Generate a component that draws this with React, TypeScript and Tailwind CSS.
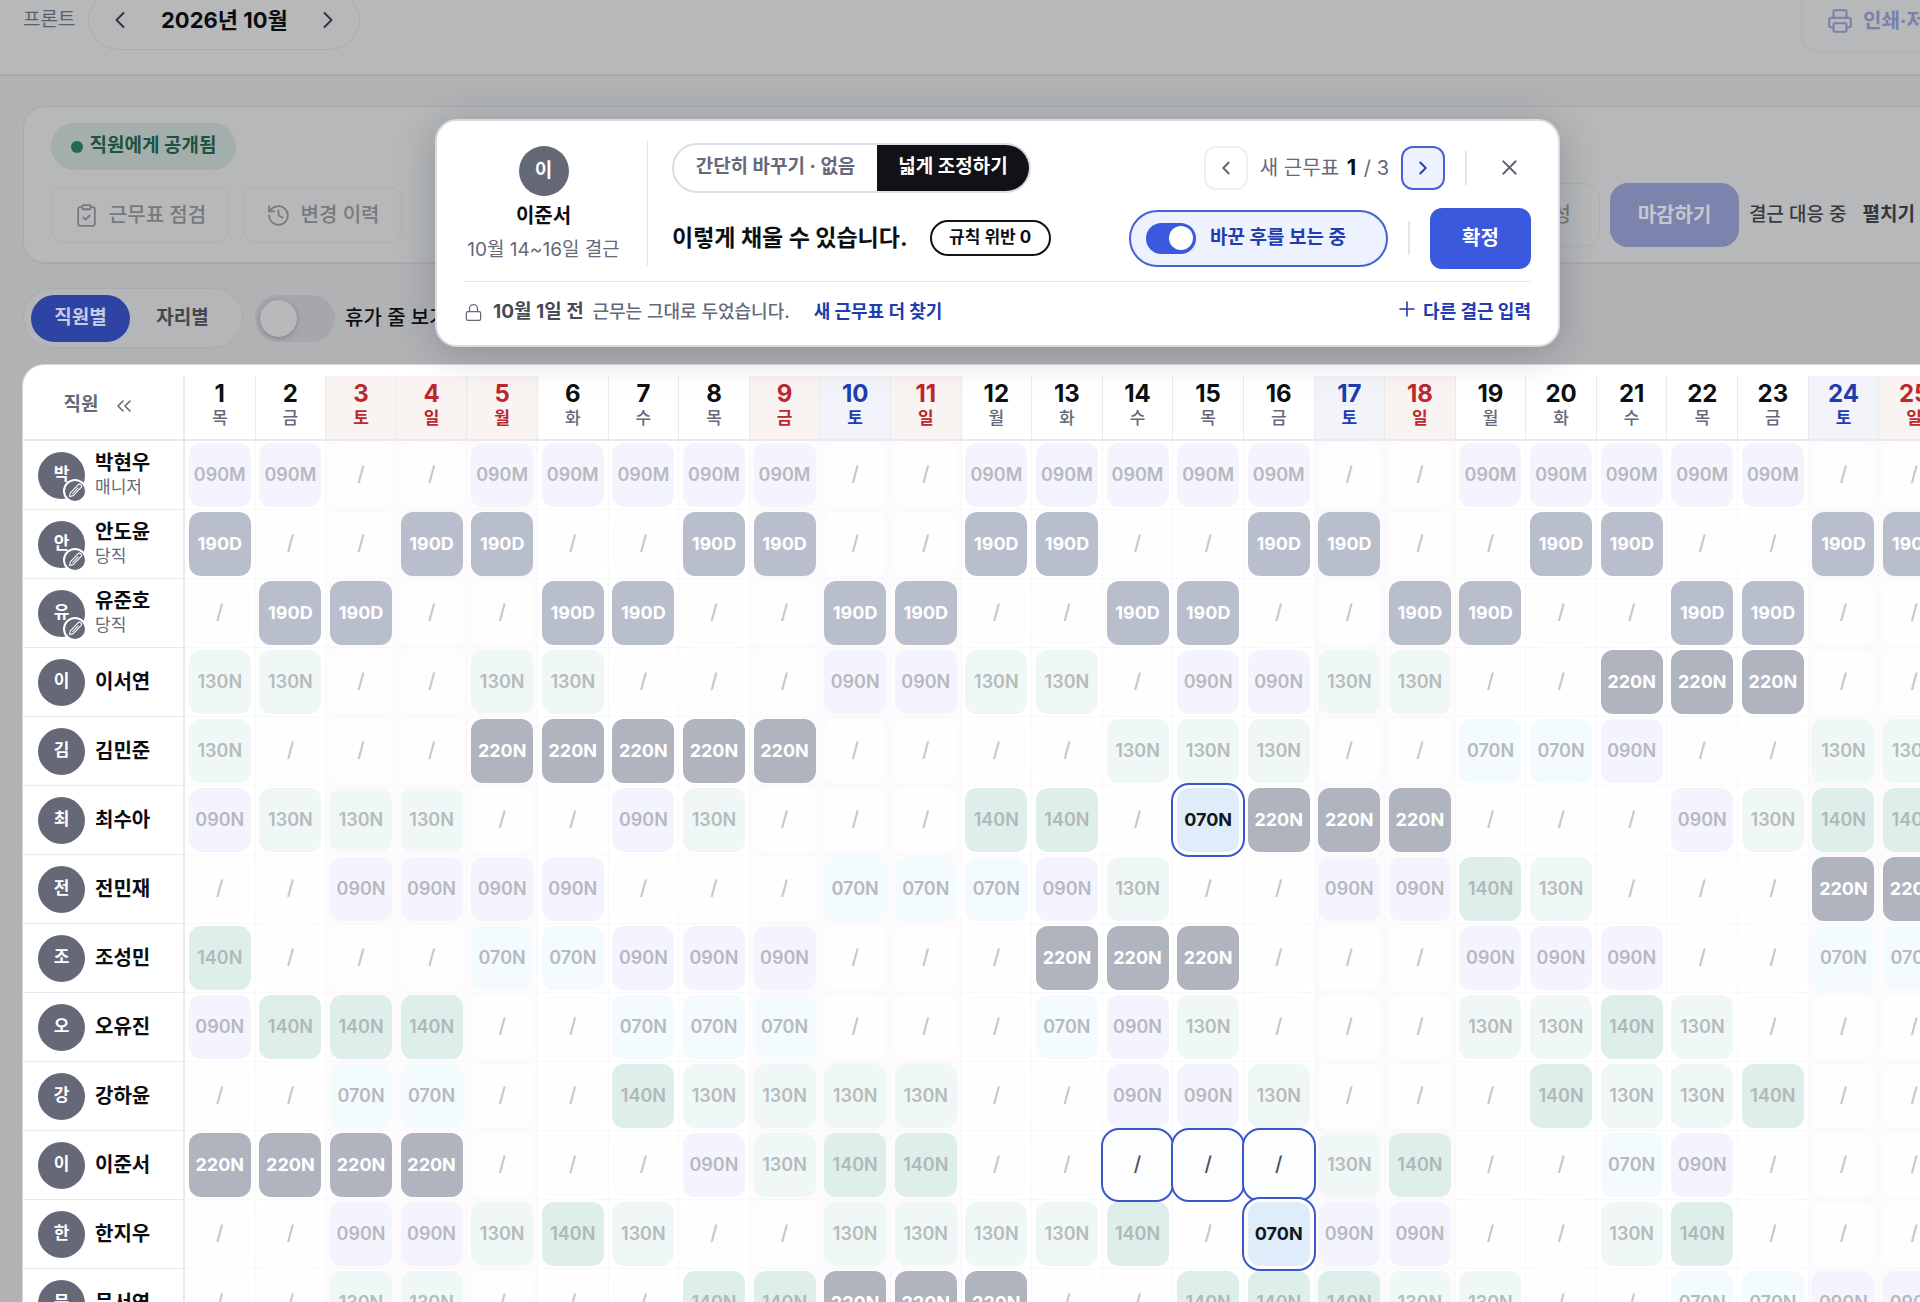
import { ChevronLeft, ChevronRight, ChevronsLeft, ClipboardCheck, History, Lock, Plus, Printer, X } from 'lucide-react'
import clsx from 'clsx'

const WEEKDAYS = ['목', '금', '토', '일', '월', '화', '수']
const HOLIDAYS = [3, 4, 5, 9, 11, 18, 25]
const SATURDAYS = [10, 17, 24]

const DAYS = Array.from({ length: 25 }, (_, i) => ({
  day: i + 1,
  weekday: WEEKDAYS[i % 7],
  holiday: HOLIDAYS.includes(i + 1),
  saturday: SATURDAYS.includes(i + 1),
}))

interface Staff {
  name: string
  role?: string
  shifts: string
}

// One token per day, "-" is a day off, "*" marks a changed cell
const STAFF: Staff[] = [
  { name: '박현우', role: '매니저', shifts: '090M 090M - - 090M 090M 090M 090M 090M - - 090M 090M 090M 090M 090M - - 090M 090M 090M 090M 090M - -' },
  { name: '안도윤', role: '당직', shifts: '190D - - 190D 190D - - 190D 190D - - 190D 190D - - 190D 190D - - 190D 190D - - 190D 190D' },
  { name: '유준호', role: '당직', shifts: '- 190D 190D - - 190D 190D - - 190D 190D - - 190D 190D - - 190D 190D - - 190D 190D - -' },
  { name: '이서연', shifts: '130N 130N - - 130N 130N - - - 090N 090N 130N 130N - 090N 090N 130N 130N - - 220N 220N 220N - -' },
  { name: '김민준', shifts: '130N - - - 220N 220N 220N 220N 220N - - - - 130N 130N 130N - - 070N 070N 090N - - 130N 130N' },
  { name: '최수아', shifts: '090N 130N 130N 130N - - 090N 130N - - - 140N 140N - 070N* 220N 220N 220N - - - 090N 130N 140N 140N' },
  { name: '전민재', shifts: '- - 090N 090N 090N 090N - - - 070N 070N 070N 090N 130N - - 090N 090N 140N 130N - - - 220N 220N' },
  { name: '조성민', shifts: '140N - - - 070N 070N 090N 090N 090N - - - 220N 220N 220N - - - 090N 090N 090N - - 070N 070N' },
  { name: '오유진', shifts: '090N 140N 140N 140N - - 070N 070N 070N - - - 070N 090N 130N - - - 130N 130N 140N 130N - - -' },
  { name: '강하윤', shifts: '- - 070N 070N - - 140N 130N 130N 130N 130N - - 090N 090N 130N - - - 140N 130N 130N 140N - -' },
  { name: '이준서', shifts: '220N 220N 220N 220N - - - 090N 130N 140N 140N - - -* -* -* 130N 140N - - 070N 090N - - -' },
  { name: '한지우', shifts: '- - 090N 090N 130N 140N 130N - - 130N 130N 130N 130N 140N - 070N* 090N 090N - - 130N 140N - - -' },
  { name: '문서연', shifts: '- - 130N 130N - - - 140N 140N 220N 220N 220N - - 140N 140N 140N 130N 130N - - 070N 070N 090N 090N' },
]

const SHIFT_STYLES: Record<string, string> = {
  '090M': 'bg-[#f3f4fe] text-[#b8b9be]',
  '090N': 'bg-[#f4f4fe] text-[#b8b9be]',
  '070N': 'bg-[#f3fbfe] text-[#b6babe]',
  '130N': 'bg-[#eff8f6] text-[#b6bbbb]',
  '140N': 'bg-[#deeeea] text-[#b0b9b8]',
  '190D': 'bg-[#b9becd] text-white',
  '220N': 'bg-[#b0b4be] text-white',
  '-': 'bg-[#fefefe] text-[#c4c5c8]',
}

function PenBadge() {
  return (
    <span className="absolute -bottom-1 -right-0.5 flex size-6 items-center justify-center rounded-full border-2 border-white bg-[#646877]">
      <svg width="15" height="15" viewBox="0 0 14 14" fill="none" stroke="#fff" strokeWidth="1" strokeLinecap="round" strokeLinejoin="round">
        <path d="M1.4 12.6l.8-3.4 7.1-7.4a1.9 1.9 0 0 1 2.8 2.6l-7.2 7.4z" />
        <path d="M4.4 9.8l5-5.2" />
      </svg>
    </span>
  )
}

function ShiftCell({ token }: { token: string }) {
  const changed = token.endsWith('*')
  const code = token.replace('*', '')
  const off = code === '-'

  return (
    <div className="relative flex h-[68px] items-center justify-center">
      {changed && (
        <span
          className={clsx(
            'absolute -inset-x-0.5 -inset-y-[3px] z-10 rounded-[18px] border-2 border-[#3b56c9]',
            off ? 'bg-[#fbfdff]' : 'bg-white',
          )}
        />
      )}
      <span
        className={clsx(
          'flex h-16 w-[62px] items-center justify-center rounded-xl pb-0.5',
          off ? 'text-[20px] font-medium' : 'text-[18px]',
          !off && (code === '190D' || code === '220N' || changed ? 'font-bold' : 'font-semibold'),
          !changed && SHIFT_STYLES[code],
          changed && 'relative z-20',
          changed && (off ? 'text-[#4c4e56]' : 'bg-[#dfedfa] text-[#10171f]'),
        )}
      >
        {off ? '/' : code}
      </span>
    </div>
  )
}

function TopBar() {
  return (
    <header className="flex h-[76px] items-start justify-between border-b-2 border-[#a8aaae] bg-[#b6b8ba] pl-[23px]">
      <div className="-mt-2.5 flex items-center gap-[13px]">
        <span className="text-[19px] text-[#5b5f68]">프론트</span>
        <div className="flex h-[60px] w-[272px] items-center justify-between rounded-full border border-[#a9abaf] px-[15px]">
          <button type="button" aria-label="이전 달" className="flex size-8 items-center justify-center text-[#33363c]">
            <ChevronLeft size={28} strokeWidth={1.7} />
          </button>
          <strong className="text-[22px] font-bold text-[#0c0d10]">2026년 10월</strong>
          <button type="button" aria-label="다음 달" className="flex size-8 items-center justify-center text-[#33363c]">
            <ChevronRight size={28} strokeWidth={1.7} />
          </button>
        </div>
      </div>
      <button
        type="button"
        className="-mt-2.5 flex h-[62px] w-[119px] items-center gap-2.5 whitespace-nowrap rounded-l-2xl border border-r-0 border-[#aeb0b3] pl-[25px] text-[20px] font-bold text-[#7980ab]"
      >
        <Printer size={26} strokeWidth={1.9} className="shrink-0" />
        인쇄·저장
      </button>
    </header>
  )
}

function ActionPanel() {
  return (
    <section className="ml-[23px] flex h-[158px] items-end justify-between rounded-l-[22px] border border-r-0 border-b-2 border-[#a8aaae] bg-[#b6b8b9] pb-[15px] pl-[27px] pr-[5px] text-[#77797c]">
      <div>
        <span className="flex h-[47px] w-[185px] items-center justify-center gap-[7px] rounded-full bg-[#a4afab] text-[19px] font-bold text-[#1d5341]">
          <span className="size-3 rounded-full bg-[#23694f]" />
          직원에게 공개됨
        </span>
        <div className="mb-1 mt-[17px] flex gap-3.5">
          <button type="button" className="flex h-14 w-[178px] items-center justify-center gap-2.5 rounded-xl border border-[#adafb2] text-[20px] font-medium">
            <ClipboardCheck size={25} strokeWidth={1.7} />
            근무표 점검
          </button>
          <button type="button" className="flex h-14 w-[159px] items-center justify-center gap-2.5 rounded-xl border border-[#adafb2] text-[20px] font-medium">
            <History size={25} strokeWidth={1.7} />
            변경 이력
          </button>
        </div>
      </div>
      <div className="flex items-center">
        <button type="button" className="h-16 rounded-2xl border border-[#adafb2] px-7 text-[20px] font-medium">
          자동 생성
        </button>
        <button type="button" className="ml-2.5 h-16 w-[129px] rounded-[18px] bg-[#7c84ae] text-[20px] font-bold text-[#c6c8cf]">
          마감하기
        </button>
        <span className="ml-2.5 text-[19px] font-medium text-[#383a40]">결근 대응 중</span>
        <button type="button" className="ml-4 text-[19px] font-bold text-[#34373d]">
          펼치기
        </button>
      </div>
    </section>
  )
}

function ViewBar() {
  return (
    <div className="ml-[23px] mt-6 flex items-center">
      <div className="flex h-[60px] items-center rounded-full border border-[#a9abaf] bg-[#b4b6b8] px-[7px]">
        <button type="button" className="h-[47px] w-[99px] rounded-full bg-[#2e44a4] text-[19px] font-bold text-[#c5cae0]">
          직원별
        </button>
        <button type="button" className="h-[47px] w-[105px] rounded-full text-[19px] font-bold text-[#44474e]">
          자리별
        </button>
      </div>
      <label className="ml-3 flex items-center gap-2.5 text-[20px] font-medium text-[#0e0f12]">
        <input
          type="checkbox"
          className="flex h-[47px] w-20 appearance-none items-center rounded-full bg-[#a5a7ac] p-[5px] before:size-[37px] before:rounded-full before:bg-[#b8b9bb] before:shadow-[0_1px_4px_rgba(0,0,0,0.25)]"
        />
        휴가 줄 보기
      </label>
    </div>
  )
}

function ScheduleTable() {
  return (
    <div className="ml-[22px] mt-4 overflow-hidden rounded-tl-[22px] border-l border-t border-[#d4d5db] bg-white pt-[11px]">
      <table className="w-[calc(100%+30px)] table-fixed border-separate border-spacing-0">
        <thead>
          <tr className="h-[65px]">
            <th className="w-[162px] border-b-2 border-r-2 border-[#e9eaf0] p-0">
              <div className="flex items-center justify-center gap-3 pb-1 pr-1 text-[19px] font-bold text-[#656979]">
                직원
                <button type="button" aria-label="직원 열 접기" className="flex size-7 items-center justify-center">
                  <ChevronsLeft size={24} strokeWidth={1.6} />
                </button>
              </div>
            </th>
            {DAYS.map(({ day, weekday, holiday, saturday }) => (
              <th
                key={day}
                className={clsx(
                  'border-b-2 border-r border-[#e9eaf0] p-0 align-top',
                  holiday && 'bg-[#f9f3f1] text-[#bd272e]',
                  saturday && 'bg-[#f2f4f9] text-[#213cae]',
                  !holiday && !saturday && 'text-[#0e0f12]',
                )}
              >
                <div className="pt-1 text-[24px] font-bold leading-7">{day}</div>
                <div className={clsx('text-[17px] leading-5', holiday || saturday ? 'font-bold' : 'font-medium text-[#656979]')}>
                  {weekday}
                </div>
              </th>
            ))}
          </tr>
        </thead>
        <tbody>
          {STAFF.map((staff) => (
            <tr key={staff.name} className="h-[69px]">
              <th scope="row" className="border-b border-r-2 border-[#e9eaf0] p-0 text-left">
                <div className="flex items-center gap-2.5 pl-[15px]">
                  <span className="relative flex size-[47px] shrink-0 items-center justify-center rounded-full bg-[#646877] text-[17px] font-bold text-white">
                    {staff.name[0]}
                    {staff.role && <PenBadge />}
                  </span>
                  <div>
                    <div className="text-[20px] font-bold leading-6 text-[#0c0d10]">{staff.name}</div>
                    {staff.role && <div className="text-[17px] font-normal leading-6 text-[#656979]">{staff.role}</div>}
                  </div>
                </div>
              </th>
              {staff.shifts.split(' ').map((token, i) => (
                <td
                  key={i}
                  className={clsx(
                    'border-b border-r border-[#f8f8fa] p-0',
                    DAYS[i].holiday && 'bg-[#fdfbfb]',
                    DAYS[i].saturday && 'bg-[#fbfbfd]',
                  )}
                >
                  <ShiftCell token={token} />
                </td>
              ))}
            </tr>
          ))}
        </tbody>
      </table>
    </div>
  )
}

function AdjustDialog() {
  return (
    <div
      role="dialog"
      aria-label="결근 대응"
      className="absolute left-[435px] right-[360px] top-[119px] z-30 rounded-[22px] border-2 border-[#d9dbe3] bg-white px-[27px] pb-[18px] pt-[19px] shadow-[0_6px_40px_rgba(20,22,40,0.22)]"
    >
      <div className="flex h-[142px] items-start border-b border-[#e4e5ec]">
        <div className="flex h-[126px] w-[184px] shrink-0 flex-col items-center border-r border-[#e4e5ec] pr-6 pt-1.5">
          <span className="flex size-[50px] items-center justify-center rounded-full bg-[#646877] text-[19px] font-bold text-white">이</span>
          <strong className="mt-2 text-[20px] font-bold leading-6 text-[#0e0f12]">이준서</strong>
          <span className="mt-2.5 whitespace-nowrap text-[19px] leading-6 text-[#656979]">10월 14~16일 결근</span>
        </div>

        <div className="ml-6 flex flex-1 flex-col">
          <div className="flex h-[55px] items-center justify-between">
            <div className="flex h-[50px] overflow-hidden rounded-full border-2 border-[#dcddea]">
              <button type="button" className="w-[203px] text-[19px] font-bold text-[#656979]">
                간단히 바꾸기 · 없음
              </button>
              <button type="button" className="w-[152px] bg-[#111216] text-[19px] font-bold text-white">
                넓게 조정하기
              </button>
            </div>
            <div className="flex items-center">
              <button type="button" aria-label="이전 근무표" className="flex size-11 items-center justify-center rounded-xl border-2 border-[#eeeff5] text-[#5d6170]">
                <ChevronLeft size={22} strokeWidth={2} />
              </button>
              <span className="mx-3 whitespace-nowrap text-[20px] text-[#656979]">
                새 근무표 <b className="mx-0.5 text-[22px] text-[#0e0f12]">1</b> / 3
              </span>
              <button type="button" aria-label="다음 근무표" className="flex size-11 items-center justify-center rounded-xl border-2 border-[#4763cf] bg-[#eef1fe] text-[#213cae]">
                <ChevronRight size={22} strokeWidth={2} />
              </button>
              <span className="ml-5 h-[34px] w-0.5 bg-[#e4e5ec]" />
              <button type="button" aria-label="닫기" className="ml-5 flex size-11 items-center justify-center text-[#5d6170]">
                <X size={25} strokeWidth={1.7} />
              </button>
            </div>
          </div>

          <div className="mt-2 flex h-[70px] items-center justify-between">
            <div className="flex items-center gap-[22px]">
              <strong className="whitespace-nowrap text-[23px] font-bold text-[#0e0f12]">이렇게 채울 수 있습니다.</strong>
              <span className="flex h-9 w-[121px] items-center justify-center rounded-full border-2 border-[#111216] text-[17px] font-bold text-[#0e0f12]">
                규칙 위반 0
              </span>
            </div>
            <div className="flex items-center">
              <label className="flex h-[57px] w-[259px] items-center gap-3.5 rounded-full border-2 border-[#4763cf] bg-[#eef1fe] pl-[15px] text-[19px] font-bold text-[#213cae]">
                <input
                  type="checkbox"
                  defaultChecked
                  className="flex h-[31px] w-[50px] appearance-none items-center justify-end rounded-full bg-[#3a59dc] px-[3px] before:size-6 before:rounded-full before:bg-white"
                />
                바꾼 후를 보는 중
              </label>
              <span className="ml-5 h-[34px] w-0.5 bg-[#e4e5ec]" />
              <button type="button" className="ml-5 h-[61px] w-[101px] rounded-xl bg-[#3a59dc] text-[20px] font-bold text-white">
                확정
              </button>
            </div>
          </div>
        </div>
      </div>

      <div className="flex items-center justify-between pt-[15px] text-[18px] leading-7">
        <div className="flex items-center">
          <Lock size={19} strokeWidth={1.6} className="mr-2.5 text-[#656979]" />
          <p className="font-medium text-[#656979]">
            <b className="mr-1 text-[19px] text-[#484b55]">10월 1일 전</b> 근무는 그대로 두었습니다.
          </p>
          <a href="#more" className="ml-6 font-bold text-[#213cae]">새 근무표 더 찾기</a>
        </div>
        <button type="button" className="flex items-center gap-1 font-bold text-[#213cae]">
          <Plus size={24} strokeWidth={1.6} className="mb-1.5" />
          다른 결근 입력
        </button>
      </div>
    </div>
  )
}

export default function App() {
  return (
    <div className="relative h-screen overflow-hidden bg-[#b1b2b4] font-['Inter','Noto_Sans_CJK_KR',sans-serif]">
      <TopBar />
      <main className="pt-[30px]">
        <ActionPanel />
        <ViewBar />
        <ScheduleTable />
      </main>
      <AdjustDialog />
    </div>
  )
}
